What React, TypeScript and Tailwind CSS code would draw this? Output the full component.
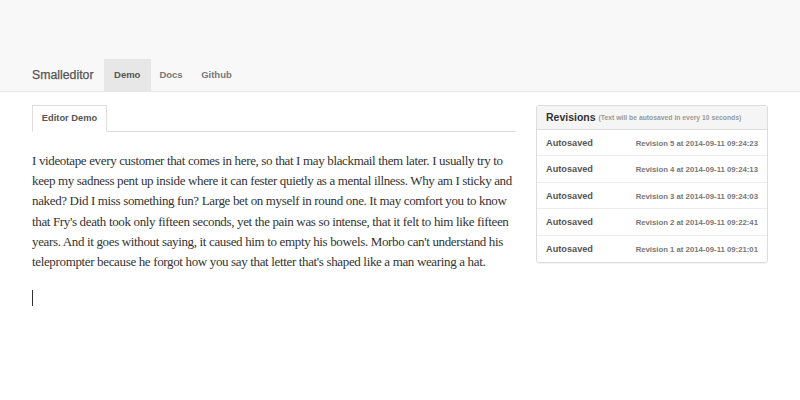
import React from "react";

const lines = [
  "I videotape every customer that comes in here, so that I may blackmail them later. I usually try to",
  "keep my sadness pent up inside where it can fester quietly as a mental illness. Why am I sticky and",
  "naked? Did I miss something fun? Large bet on myself in round one. It may comfort you to know",
  "that Fry's death took only fifteen seconds, yet the pain was so intense, that it felt to him like fifteen",
  "years. And it goes without saying, it caused him to empty his bowels. Morbo can't understand his",
  "teleprompter because he forgot how you say that letter that's shaped like a man wearing a hat.",
];

const revisions = [
  "Revision 5 at 2014-09-11 09:24:23",
  "Revision 4 at 2014-09-11 09:24:13",
  "Revision 3 at 2014-09-11 09:24:03",
  "Revision 2 at 2014-09-11 09:22:41",
  "Revision 1 at 2014-09-11 09:21:01",
];

export default function App() {
  return (
    <div className="w-[800px] h-[400px] bg-white overflow-hidden" style={{ fontFamily: '"Liberation Sans", Arial, sans-serif' }}>
      <div className="h-[92px] bg-[#f8f8f8] border-b border-[#e7e7e7] flex items-end pl-[32px]">
        <div className="flex items-center h-[32px]">
          <span className="text-[12.3px] text-[#555] mr-[10px] leading-none [-webkit-text-stroke:0.25px_#555]">Smalleditor</span>
          <span className="h-[32px] px-[10.5px] bg-[#e7e7e7] text-[#555] font-bold text-[9.5px] flex items-center">Demo</span>
          <span className="h-[32px] px-[8.5px] text-[#777] font-bold text-[9.5px] flex items-center">Docs</span>
          <span className="h-[32px] px-[10px] text-[#777] font-bold text-[9.5px] flex items-center">Github</span>
        </div>
      </div>
      <div className="flex pl-[32px] pt-[13px]">
        <div className="w-[484px]">
          <div className="flex border-b border-[#ddd] h-[27px]">
            <div className="h-[27px] w-[75px] border border-[#ddd] border-b-white bg-white text-[9.3px] font-bold text-[#555] flex items-center justify-center -mb-px">
              Editor Demo
            </div>
          </div>
          <div
            className="mt-[19px] text-[#333] text-[13px] leading-[20.2px] whitespace-nowrap tracking-[-0.35px]"
            style={{ fontFamily: '"Liberation Serif", "Times New Roman", serif' }}
          >
            {lines.map((l, i) => (
              <div key={i}>{l}</div>
            ))}
            <div className="mt-[18px] w-px h-[16px] bg-[#333]"></div>
          </div>
        </div>
        <div className="ml-[20px] w-[232px] h-[158px] border border-[#ddd] rounded-[3px] shadow-[0_1px_1px_rgba(0,0,0,0.05)] overflow-hidden">
          <div className="h-[24px] bg-[#f5f5f5] border-b border-[#ddd] flex items-center px-[9px]">
            <span className="text-[10.5px] font-bold text-[#333]">Revisions</span>
            <span className="text-[6.8px] font-bold text-[#999] ml-[3px] mt-[2px]">(Text will be autosaved in every 10 seconds)</span>
          </div>
          {revisions.map((r, i) => (
            <div key={i} className={`h-[26.4px] pt-[2px] flex items-center justify-between pl-[9px] pr-[9px] ${i < 4 ? "border-b border-[#eee]" : ""}`}>
              <span className="text-[9.2px] font-bold text-[#555]">Autosaved</span>
              <span className="text-[7.75px] font-bold text-[#777]">{r}</span>
            </div>
          ))}
        </div>
      </div>
    </div>
  );
}
